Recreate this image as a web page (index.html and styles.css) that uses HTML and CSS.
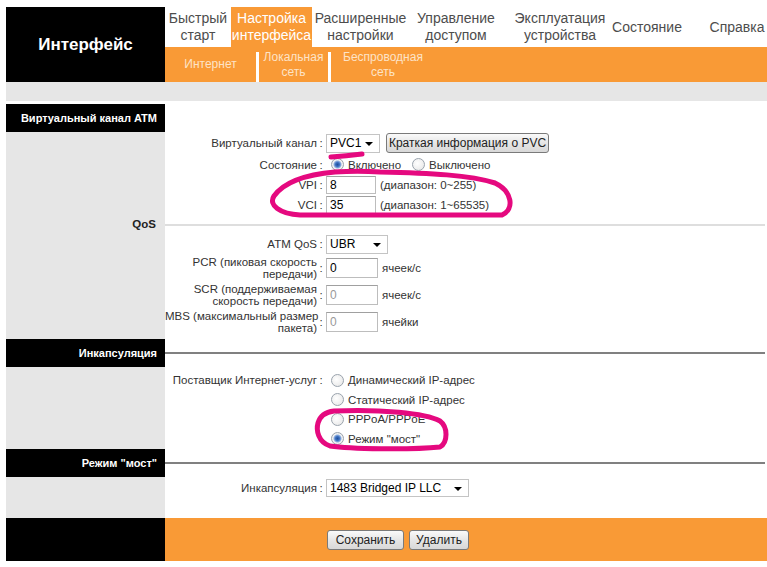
FILE: index.html
```html
<!DOCTYPE html>
<html lang="ru">
<head>
    <meta charset="UTF-8">
    <title>Интерфейс</title>
    <link rel="stylesheet" href="styles.css">
</head>
<body>
<div class="page">
    <div class="top">
        <div class="brand">Интерфейс</div>
        <div class="nav">
            <div class="menu">
                <div class="item w1">Быстрый<br>старт</div>
                <div class="item w2 active">Настройка<br>интерфейса</div>
                <div class="item w3">Расширенные<br>настройки</div>
                <div class="item w4">Управление<br>доступом</div>
                <div class="item w5">Эксплуатация<br>устройства</div>
                <div class="item w6">Состояние</div>
                <div class="item w7">Справка</div>
            </div>
            <div class="submenu">
                <div class="sub s1">Интернет</div>
                <div class="sep"></div>
                <div class="sub s2">Локальная<br>сеть</div>
                <div class="sep"></div>
                <div class="sub s3">Беспроводная<br>сеть</div>
            </div>
        </div>
    </div>
    <div class="strip"></div>
    <div class="gap"></div>

    <!-- ATM -->
    <div class="row title">
        <div class="side">Виртуальный канал ATM</div>
        <div class="main"></div>
    </div>
    <div class="row field h22">
        <div class="side"></div>
        <div class="main">
            <div class="lbl">Виртуальный канал</div><div class="colon">:</div>
            <div class="val">
                <div class="select pvc">PVC1<span class="arrow"></span></div>
                <button class="btn info">Краткая информация о PVC</button>
            </div>
        </div>
    </div>
    <div class="row field h21">
        <div class="side"></div>
        <div class="main">
            <div class="lbl">Состояние</div><div class="colon">:</div>
            <div class="val">
                <span class="radio on"></span><span class="opt">Включено</span>
                <span class="radio"></span><span class="opt">Выключено</span>
            </div>
        </div>
    </div>
    <div class="row field">
        <div class="side"></div>
        <div class="main">
            <div class="lbl">VPI</div><div class="colon">:</div>
            <div class="val"><input class="txt" type="text" value="8"><span class="note">(диапазон: 0~255)</span></div>
        </div>
    </div>
    <div class="row field">
        <div class="side"></div>
        <div class="main">
            <div class="lbl">VCI</div><div class="colon">:</div>
            <div class="val"><input class="txt" type="text" value="35"><span class="note">(диапазон: 1~65535)</span></div>
        </div>
    </div>
    <div class="row sub-head">
        <div class="side">QoS</div>
        <div class="main"><div class="rule light"></div></div>
    </div>
    <div class="row field">
        <div class="side"></div>
        <div class="main">
            <div class="lbl">ATM QoS</div><div class="colon">:</div>
            <div class="val"><div class="select qos">UBR<span class="arrow"></span></div></div>
        </div>
    </div>
    <div class="row field h27">
        <div class="side"></div>
        <div class="main">
            <div class="lbl wrap">PCR (пиковая скорость<br>передачи)</div><div class="colon">:</div>
            <div class="val"><input class="txt num" type="text" value="0"><span class="note">ячеек/с</span></div>
        </div>
    </div>
    <div class="row field h27">
        <div class="side"></div>
        <div class="main">
            <div class="lbl wrap">SCR (поддерживаемая<br>скорость передачи)</div><div class="colon">:</div>
            <div class="val"><input class="txt num" type="text" value="0" disabled><span class="note">ячеек/с</span></div>
        </div>
    </div>
    <div class="row field h28">
        <div class="side"></div>
        <div class="main">
            <div class="lbl wrap">MBS (максимальный размер<br>пакета)</div><div class="colon">:</div>
            <div class="val"><input class="txt num" type="text" value="0" disabled><span class="note">ячейки</span></div>
        </div>
    </div>
    <div class="row pad3"><div class="side"></div><div class="main"></div></div>

    <!-- Encapsulation -->
    <div class="row title">
        <div class="side">Инкапсуляция</div>
        <div class="main"><div class="rule"></div></div>
    </div>
    <div class="row pad3"><div class="side"></div><div class="main"></div></div>
    <div class="row field">
        <div class="side"></div>
        <div class="main">
            <div class="lbl">Поставщик Интернет-услуг</div><div class="colon">:</div>
            <div class="val"><span class="radio"></span><span class="opt">Динамический IP-адрес</span></div>
        </div>
    </div>
    <div class="row field h19">
        <div class="side"></div>
        <div class="main">
            <div class="lbl"></div><div class="colon"></div>
            <div class="val"><span class="radio"></span><span class="opt">Статический IP-адрес</span></div>
        </div>
    </div>
    <div class="row field">
        <div class="side"></div>
        <div class="main">
            <div class="lbl"></div><div class="colon"></div>
            <div class="val"><span class="radio"></span><span class="opt">PPPoA/PPPoE</span></div>
        </div>
    </div>
    <div class="row field h19">
        <div class="side"></div>
        <div class="main">
            <div class="lbl"></div><div class="colon"></div>
            <div class="val"><span class="radio on"></span><span class="opt">Режим "мост"</span></div>
        </div>
    </div>
    <div class="row pad1"><div class="side"></div><div class="main"></div></div>

    <!-- Bridge -->
    <div class="row title">
        <div class="side">Режим "мост"</div>
        <div class="main"><div class="rule"></div></div>
    </div>
    <div class="row pad1"><div class="side"></div><div class="main"></div></div>
    <div class="row field">
        <div class="side"></div>
        <div class="main">
            <div class="lbl">Инкапсуляция</div><div class="colon">:</div>
            <div class="val"><div class="select encap">1483 Bridged IP LLC<span class="arrow"></span></div></div>
        </div>
    </div>
    <div class="row pad19"><div class="side"></div><div class="main"></div></div>

    <div class="row footer">
        <div class="side"></div>
        <div class="main">
            <button class="btn save">Сохранить</button>
            <button class="btn del">Удалить</button>
        </div>
    </div>
</div>

<svg class="marks" width="767" height="567" viewBox="0 0 767 567">
    <path d="M331 157 Q346 156 362 154"/>
    <path d="M380 172 C430 173 470 175 495 183 C512 191 515 209 502 215 L300 215 C280 214 268 205 274 196 C282 185 300 175 335 172 C350 171 365 171 380 172"/>
    <path d="M334 411 C380 409 425 413 440 421 C448 427 448 442 440 447 C410 450 350 449 330 446 C318 442 316 430 318 423 C320 416 326 412 334 411"/>
</svg>
</body>
</html>
```

FILE: styles.css
```css
body {
    margin: 7px 0 0 6px;
    overflow: hidden;
    background: #fff;
    font-family: 'Liberation Sans', Arial, sans-serif;
    font-size: 11.5px;
    color: #000;
}

.page {
    width: 761px;
}

/* header */

.top {
    display: flex;
    height: 75px;
}

.brand {
    width: 159px;
    flex: none;
    background: #000;
    color: #fff;
    font-size: 17px;
    font-weight: bold;
    text-align: center;
    line-height: 75px;
}

.nav {
    flex: 1;
    display: flex;
    flex-direction: column;
    overflow: hidden;
}

.menu {
    display: flex;
    height: 40px;
    background: #fff;
}

.item {
    flex: none;
    display: flex;
    align-items: center;
    justify-content: center;
    text-align: center;
    color: #4d4d4d;
    font-size: 14px;
    line-height: 17px;
    white-space: nowrap;
}

.item.active {
    background: #f99a36;
    color: #fff;
}

.w1 { width: 66px; }
.w2 { width: 81px; }
.w3 { width: 97px; }
.w4 { width: 94px; }
.w5 { width: 114px; }
.w6 { width: 60px; }
.w7 { width: 120px; }

.submenu {
    display: flex;
    height: 35px;
    background: #f99a36;
}

.sub {
    display: flex;
    align-items: center;
    justify-content: center;
    text-align: center;
    color: #fde3c6;
    font-size: 12px;
    line-height: 15px;
}

.s1 { width: 91px; }
.s2 { width: 69px; }
.s3 { width: 104px; }

.sep {
    width: 3px;
    margin-top: 5px;
    background: #fff;
}

.strip {
    height: 19px;
    background: #e6e6e6;
}

.gap {
    height: 3px;
}

/* sections */

.row {
    display: flex;
}

.side {
    width: 159px;
    flex: none;
    background: #e6e6e6;
}

.main {
    flex: 1;
    display: flex;
    align-items: center;
}

.title {
    height: 28px;
}

.title .side {
    background: #000;
    color: #fff;
    font-size: 11px;
    font-weight: bold;
    text-align: right;
    line-height: 28px;
    padding-right: 8px;
    box-sizing: border-box;
}

.sub-head {
    height: 19px;
}

.sub-head .side {
    color: #222;
    font-weight: bold;
    text-align: right;
    line-height: 19px;
    padding-right: 9px;
    box-sizing: border-box;
}

.rule {
    flex: 1;
    height: 2px;
    margin-right: 2px;
    background: #808080;
}

.rule.light {
    background: #dedede;
}

.field { height: 20px; }
.h19 { height: 19px; }
.h21 { height: 21px; }
.h22 { height: 22px; }
.h27 { height: 27px; }
.h28 { height: 28px; }
.pad1 { height: 1px; }
.pad3 { height: 3px; }
.pad19 { height: 20px; }

.lbl {
    width: 152px;
    flex: none;
    text-align: right;
    line-height: 12px;
    color: #333;
}

.lbl.wrap {
    white-space: nowrap;
    direction: rtl;
    unicode-bidi: plaintext;
}

.colon {
    width: 8px;
    flex: none;
    text-align: center;
    color: #333;
}

.val {
    display: flex;
    align-items: center;
    padding-left: 1px;
}

.note {
    margin-left: 4px;
    color: #333;
}

.opt {
    margin-left: 4px;
    margin-right: 6px;
    color: #333;
}

/* controls */

.txt {
    width: 50px;
    height: 18px;
    box-sizing: border-box;
    margin: 0;
    padding: 0 3px;
    border: 1px solid #bdbdbd;
    border-top-color: #a0a0a0;
    font-family: inherit;
    font-size: 12px;
    color: #000;
    background: #fff;
}

.txt.num {
    width: 52px;
    height: 20px;
}

.txt:disabled {
    color: #999;
}

.select {
    position: relative;
    height: 19px;
    box-sizing: border-box;
    border: 1px solid #c4c4c4;
    padding-left: 3px;
    line-height: 17px;
    font-size: 12px;
    background: #fff;
}

.pvc { width: 54px; }
.qos { width: 62px; }
.encap { width: 143px; height: 18px; line-height: 16px; }

.arrow {
    position: absolute;
    right: 6px;
    top: 7px;
    border-left: 4px solid transparent;
    border-right: 4px solid transparent;
    border-top: 4px solid #000;
}

.radio {
    width: 11px;
    height: 11px;
    margin-left: 5px;
    border-radius: 50%;
    border: 1px solid #9aa3ad;
    background: radial-gradient(circle at 40% 40%, #fff 0, #e4e4e4 100%);
    box-sizing: content-box;
    flex: none;
}

.radio.on {
    background: radial-gradient(circle, #1f4f9a 0, #3b6fc0 2px, #8fb0e0 3.5px, #f4f4f4 4.5px, #e2e2e2 100%);
}

.btn {
    height: 20px;
    margin: 0;
    padding: 0;
    border: 1px solid #7a7a7a;
    border-radius: 3px;
    background: linear-gradient(#fafafa, #e6e6e6 50%, #d8d8d8);
    font-family: inherit;
    font-size: 12px;
    color: #222;
}

.info {
    width: 163px;
    margin-left: 6px;
}

.footer {
    height: 43px;
}

.footer .side {
    background: #000;
}

.footer .main {
    background: #f99a36;
    padding-left: 162px;
}

.save { width: 77px; }
.del { width: 60px; margin-left: 5px; }

/* hand-drawn marks */

.marks {
    position: absolute;
    left: 0;
    top: 0;
    pointer-events: none;
}

.marks path {
    fill: none;
    stroke: #e5097f;
    stroke-width: 5;
    stroke-linecap: round;
    stroke-linejoin: round;
}
```
